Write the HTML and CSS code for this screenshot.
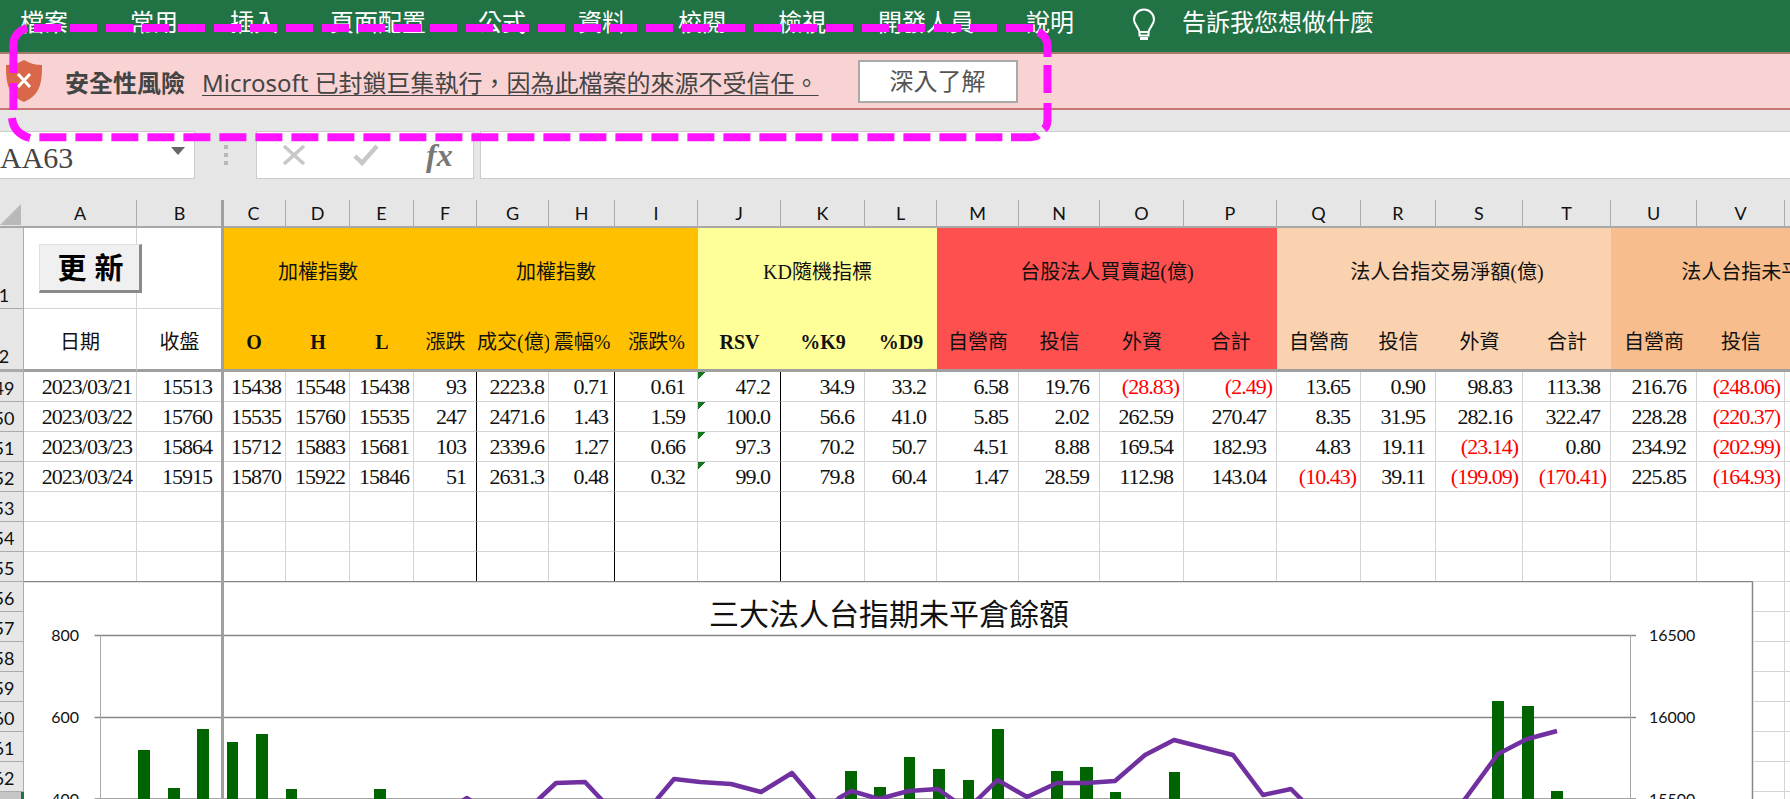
FILE: index.html
```html
<!DOCTYPE html>
<html lang="zh-Hant">
<head>
  <meta charset="UTF-8">
  <title>三大法人台指期未平倉餘額 - Excel</title>
  <link rel="stylesheet" href="styles.css">
</head>
<body>
  <!-- ribbon tabs -->
  <div class="ribbon">
    <span class="tab first">檔案</span>
    <span class="tab">常用</span>
    <span class="tab">插入</span>
    <span class="tab">頁面配置</span>
    <span class="tab">公式</span>
    <span class="tab">資料</span>
    <span class="tab">校閱</span>
    <span class="tab">檢視</span>
    <span class="tab">開發人員</span>
    <span class="tab">說明</span>
    <svg class="bulb" width="26" height="32" viewBox="0 0 26 32" fill="none" stroke="#fff" stroke-width="2">
      <path d="M13 1.5a10 10 0 0 0-10 10c0 5 4 7 5.5 12.5h9c1.5-5.5 5.5-7.500 5.500-12.500a10 10 0 0 0-10-10z"/>
      <path d="M8.5 24v3.500h9V24"/>
      <path d="M9 30.500h8" stroke-width="3"/>
    </svg>
    <span class="tell">告訴我您想做什麼</span>
  </div>

  <!-- security warning -->
  <div class="trust">
    <svg class="shield" width="36" height="42" viewBox="0 0 36 42">
      <path d="M18 0c5 3 11 5 18 5 0 16-1 30-18 37C1 35 0 21 0 5c7 0 13-2 18-5z" fill="#d9674a"/>
      <path d="M12 14l12 13M24 14L12 27" stroke="#fff" stroke-width="3" fill="none"/>
    </svg>
    <b class="trust-title">安全性風險</b>
    <span class="trust-msg">Microsoft 已封鎖巨集執行，因為此檔案的來源不受信任。</span>
    <span class="trust-btn">深入了解</span>
  </div>

  <!-- name box and formula bar -->
  <div class="formula-row">
    <div class="namebox"><span>AA63</span><i class="caret"></i></div>
    <div class="dots"><i></i><i></i><i></i></div>
    <div class="fx-box">
      <svg width="24" height="20" viewBox="0 0 24 20" fill="none" stroke="#c8c8c8" stroke-width="3.5"><path d="M2 1l20 18M22 1L2 19"/></svg>
      <svg width="26" height="22" viewBox="0 0 26 22" fill="none" stroke="#c8c8c8" stroke-width="4.5"><path d="M2 12l7 7L24 2"/></svg>
      <span class="fx">fx</span>
    </div>
    <div class="formula-input"></div>
  </div>

  <div class="sheet">
    <table class="grid">
      <colgroup>
        <col class="c-head">
        <col style="width:113px"><col style="width:85px"><col style="width:64px"><col style="width:64px">
        <col style="width:64px"><col style="width:63px"><col style="width:72px"><col style="width:66px">
        <col style="width:83px"><col style="width:83px"><col style="width:84px"><col style="width:72px">
        <col style="width:82px"><col style="width:81px"><col style="width:84px"><col style="width:93px">
        <col style="width:84px"><col style="width:75px"><col style="width:87px"><col style="width:88px">
        <col style="width:86px"><col style="width:88px"><col style="width:85px"><col style="width:95px">
      </colgroup>
      <tr class="cols">
        <th class="corner"><svg width="21" height="21" viewBox="0 0 21 21"><path d="M21 0v21H0z" fill="#b9b9b9"/></svg></th>
        <th>A</th><th class="fz">B</th><th>C</th><th>D</th><th>E</th><th>F</th><th>G</th><th>H</th><th>I</th>
        <th>J</th><th>K</th><th>L</th><th>M</th><th>N</th><th>O</th><th>P</th><th>Q</th><th>R</th><th>S</th>
        <th>T</th><th>U</th><th>V</th><th>W</th><th>X</th>
      </tr>
      <tr class="h1">
        <th class="rh"><span>1</span></th>
        <td></td><td class="fz"></td>
        <td colspan="3" class="amber">加權指數</td>
        <td colspan="4" class="amber">加權指數</td>
        <td colspan="3" class="lemon">KD隨機指標</td>
        <td colspan="4" class="red">台股法人買賣超(億)</td>
        <td colspan="4" class="peach">法人台指交易淨額(億)</td>
        <td colspan="4" class="tan">法人台指未平倉餘額(億)</td>
      </tr>
      <tr class="h2">
        <th class="rh"><span>2</span></th>
        <td>日期</td><td class="fz">收盤</td>
        <td class="amber lat">O</td><td class="amber lat">H</td><td class="amber lat">L</td>
        <td class="amber">漲跌</td><td class="amber">成交(億)</td><td class="amber">震幅%</td><td class="amber">漲跌%</td>
        <td class="lemon lat">RSV</td><td class="lemon lat">%K9</td><td class="lemon lat">%D9</td>
        <td class="red">自營商</td><td class="red">投信</td><td class="red">外資</td><td class="red">合計</td>
        <td class="peach">自營商</td><td class="peach">投信</td><td class="peach">外資</td><td class="peach">合計</td>
        <td class="tan">自營商</td><td class="tan">投信</td><td class="tan">外資</td><td class="tan">合計</td>
      </tr>
      <tr class="d">
        <th class="rh"><span>49</span></th>
        <td>2023/03/21</td><td>15513</td><td>15438</td><td>15548</td><td>15438</td><td>93</td><td>2223.8</td><td>0.71</td><td>0.61</td>
        <td class="tri">47.2</td><td>34.9</td><td>33.2</td><td>6.58</td><td>19.76</td><td class="neg">(28.83)</td><td class="neg">(2.49)</td>
        <td>13.65</td><td>0.90</td><td>98.83</td><td>113.38</td><td>216.76</td><td class="neg">(248.06)</td><td></td><td></td>
      </tr>
      <tr class="d">
        <th class="rh"><span>50</span></th>
        <td>2023/03/22</td><td>15760</td><td>15535</td><td>15760</td><td>15535</td><td>247</td><td>2471.6</td><td>1.43</td><td>1.59</td>
        <td class="tri">100.0</td><td>56.6</td><td>41.0</td><td>5.85</td><td>2.02</td><td>262.59</td><td>270.47</td>
        <td>8.35</td><td>31.95</td><td>282.16</td><td>322.47</td><td>228.28</td><td class="neg">(220.37)</td><td></td><td></td>
      </tr>
      <tr class="d">
        <th class="rh"><span>51</span></th>
        <td>2023/03/23</td><td>15864</td><td>15712</td><td>15883</td><td>15681</td><td>103</td><td>2339.6</td><td>1.27</td><td>0.66</td>
        <td class="tri">97.3</td><td>70.2</td><td>50.7</td><td>4.51</td><td>8.88</td><td>169.54</td><td>182.93</td>
        <td>4.83</td><td>19.11</td><td class="neg">(23.14)</td><td>0.80</td><td>234.92</td><td class="neg">(202.99)</td><td></td><td></td>
      </tr>
      <tr class="d">
        <th class="rh"><span>52</span></th>
        <td>2023/03/24</td><td>15915</td><td>15870</td><td>15922</td><td>15846</td><td>51</td><td>2631.3</td><td>0.48</td><td>0.32</td>
        <td class="tri">99.0</td><td>79.8</td><td>60.4</td><td>1.47</td><td>28.59</td><td>112.98</td><td>143.04</td>
        <td class="neg">(10.43)</td><td>39.11</td><td class="neg">(199.09)</td><td class="neg">(170.41)</td><td>225.85</td><td class="neg">(164.93)</td><td></td><td></td>
      </tr>
      <tr class="d">
        <th class="rh"><span>53</span></th>
        <td></td><td></td><td></td><td></td><td></td><td></td><td></td><td></td><td></td><td></td><td></td><td></td>
        <td></td><td></td><td></td><td></td><td></td><td></td><td></td><td></td><td></td><td></td><td></td><td></td>
      </tr>
      <tr class="d">
        <th class="rh"><span>54</span></th>
        <td></td><td></td><td></td><td></td><td></td><td></td><td></td><td></td><td></td><td></td><td></td><td></td>
        <td></td><td></td><td></td><td></td><td></td><td></td><td></td><td></td><td></td><td></td><td></td><td></td>
      </tr>
      <tr class="d">
        <th class="rh"><span>55</span></th>
        <td></td><td></td><td></td><td></td><td></td><td></td><td></td><td></td><td></td><td></td><td></td><td></td>
        <td></td><td></td><td></td><td></td><td></td><td></td><td></td><td></td><td></td><td></td><td></td><td></td>
      </tr>
      <!-- the chart covers everything left of W from here down -->
      <tr class="b"><th class="rh"><span>56</span></th><td colspan="22"></td><td></td><td></td></tr>
      <tr class="b"><th class="rh"><span>57</span></th><td colspan="22"></td><td></td><td></td></tr>
      <tr class="b"><th class="rh"><span>58</span></th><td colspan="22"></td><td></td><td></td></tr>
      <tr class="b"><th class="rh"><span>59</span></th><td colspan="22"></td><td></td><td></td></tr>
      <tr class="b"><th class="rh"><span>60</span></th><td colspan="22"></td><td></td><td></td></tr>
      <tr class="b"><th class="rh"><span>61</span></th><td colspan="22"></td><td></td><td></td></tr>
      <tr class="b"><th class="rh"><span>62</span></th><td colspan="22"></td><td></td><td></td></tr>
      <tr class="b"><th class="rh sel"><span>63</span></th><td colspan="22"></td><td></td><td></td></tr>
    </table>
  </div>

  <!-- chart floats over the cells, drawn in page coordinates -->
  <svg class="chart" width="1730" height="218" viewBox="24 581 1730 218">
    <path d="M24 581.500H1752.500V799" stroke="#868686" stroke-width="1.500" fill="none"/>
    <text class="chart-title" x="889" y="625" text-anchor="middle">三大法人台指期未平倉餘額</text>
    <path d="M94.500 635.500H1636M94.500 717.500H1636M94.500 799H1636" stroke="#868686" stroke-width="1.500" fill="none"/>
    <path d="M100.500 635V799M1630.500 635V799" stroke="#a6a6a6" stroke-width="1" fill="none"/>
    <g class="axis">
      <text x="79" y="641" text-anchor="end">800</text>
      <text x="79" y="723" text-anchor="end">600</text>
      <text x="79" y="805" text-anchor="end">400</text>
      <text x="1649" y="641">16500</text>
      <text x="1649" y="723">16000</text>
      <text x="1649" y="805">15500</text>
    </g>
    <g fill="#006400">
      <rect x="138" y="750" width="12" height="50"/>
      <rect x="168" y="788" width="12" height="12"/>
      <rect x="197" y="729" width="12" height="71"/>
      <rect x="227" y="742" width="11" height="58"/>
      <rect x="256" y="734" width="12" height="66"/>
      <rect x="286" y="789" width="11" height="11"/>
      <rect x="374" y="789" width="12" height="11"/>
      <rect x="845" y="771" width="12" height="29"/>
      <rect x="874" y="787" width="12" height="13"/>
      <rect x="904" y="757" width="11" height="43"/>
      <rect x="933" y="769" width="12" height="31"/>
      <rect x="963" y="780" width="11" height="20"/>
      <rect x="992" y="729" width="12" height="71"/>
      <rect x="1051" y="771" width="12" height="29"/>
      <rect x="1080" y="767" width="13" height="33"/>
      <rect x="1110" y="792" width="11" height="8"/>
      <rect x="1169" y="772" width="11" height="28"/>
      <rect x="1492" y="701" width="12" height="99"/>
      <rect x="1522" y="706" width="12" height="94"/>
      <rect x="1551" y="791" width="12" height="9"/>
    </g>
    <path d="M440 815L467 798 490 815 525 815 540 798 556 783 585 782 600 798 620 820 645 820 658 798 674 779 700 782 731 784 761 792 792 773 813 798 825 815 839 798 851.500 791 879 799 908.500 791 938 789 952 799 965 810 978 799 997.500 780 1027 797 1057 783 1086 783 1115 781 1145 755 1174 740 1233 755 1263 795 1291 789 1301 799 1320 830 1440 830 1465 799 1498 754 1527 739 1557 731" fill="none" stroke="#7030a0" stroke-width="4.500" stroke-linejoin="round"/>
  </svg>

  <!-- macro button and freeze panes -->
  <div class="macro-btn">更新</div>
  <div class="freeze"></div>

  <!-- annotation drawn on the screenshot -->
  <svg class="mark" width="1100" height="150" viewBox="0 0 1100 150" fill="none" stroke="#ff12ff" stroke-width="8">
    <path d="M27 28C18 31 13.4 36 13.4 45V73M13.4 83V110M12 118C13 128 19 135 30 138"/>
    <path d="M34 28H1034" stroke-dasharray="27 9"/>
    <path d="M39.4 137.300H1010" stroke-dasharray="27 9"/>
    <path d="M1011 137.300H1030Q1036 137 1038 135"/>
    <path d="M1038 32Q1047.500 36 1047.500 47V57M1047.500 65V93M1047.500 103V120Q1047.500 126 1044 129"/>
  </svg>
</body>
</html>
```

FILE: styles.css
```css
html, body {
  margin: 0;
  width: 1790px;
  height: 799px;
  overflow: hidden;
  background: #e6e6e6;
  position: relative;
  font-family: "Noto Sans", "Noto Sans CJK TC", sans-serif;
}

/* ribbon */
.ribbon {
  height: 54px;
  background: #217346;
  color: #fff;
  display: flex;
  align-items: center;
  gap: 52px;
  font-size: 24px;
  padding: 0 0 11px 20px;
  box-sizing: border-box;
  border-bottom: 2px solid #a57a68;
}
.tab.first {
  margin-right: 10px;
}
.bulb {
  margin-left: 5px;
  margin-top: 6px;
}
.tell {
  margin-left: -27px;
}

/* security warning */
.trust {
  height: 56px;
  box-sizing: border-box;
  background: #f9d3d3;
  border-bottom: 2px solid #c77575;
  display: flex;
  align-items: center;
  padding-left: 6px;
  color: #444;
  font-size: 24px;
}
.shield {
  margin-right: 23px;
}
.trust-title {
  width: 137px;
  font-weight: 700;
}
.trust-msg {
  text-decoration: underline;
  text-underline-offset: 3px;
  text-decoration-thickness: 1px;
}
.trust-btn {
  margin-left: 39px;
  width: 160px;
  height: 43px;
  box-sizing: border-box;
  background: #fff;
  border: 2.5px solid #aaa;
  color: #555;
  text-align: center;
  line-height: 37px;
}

/* formula bar */
.formula-row {
  display: flex;
  height: 69px;
  padding-top: 21px;
  box-sizing: border-box;
}
.namebox, .fx-box, .formula-input {
  height: 48px;
  background: #fff;
  border: 1px solid #ccc;
  box-sizing: border-box;
}
.namebox {
  width: 195px;
  border-left: 0;
  display: flex;
  align-items: center;
  padding-top: 5px;
  font: 30px "Liberation Serif", serif;
  color: #444;
}
.caret {
  margin-left: auto;
  margin-right: 9px;
  margin-top: -14px;
  border: 7px solid transparent;
  border-top: 8px solid #666;
  border-bottom: 0;
}
.dots {
  width: 61px;
  height: 48px;
  display: flex;
  flex-direction: column;
  align-items: center;
  gap: 4px;
  padding-top: 14px;
  box-sizing: border-box;
}
.dots i {
  width: 4px;
  height: 4px;
  background: #b9b9b9;
}
.fx-box {
  width: 218px;
  margin-right: 6px;
  display: flex;
  align-items: center;
  padding-left: 25px;
  gap: 47px;
}
.fx {
  font: italic 700 32px "Liberation Serif", serif;
  color: #777;
}
.formula-input {
  flex: 1;
  border-right: 0;
}

/* worksheet */
.sheet {
  overflow: hidden;
  height: 620px;
  padding-top: 21px;
  box-sizing: border-box;
}
.grid {
  table-layout: fixed;
  width: 1965px;
  border-collapse: separate;
  border-spacing: 0;
  background: #fff;
  font-family: "Liberation Serif", "Noto Sans CJK TC", serif;
  color: #111;
}
.c-head {
  width: 24px;
}
.grid td, .grid th {
  padding: 0;
  border-right: 1px solid #d4d4d4;
  border-bottom: 1px solid #d4d4d4;
  box-sizing: border-box;
  white-space: nowrap;
  overflow: hidden;
}
.cols th {
  height: 28px;
  background: #e6e6e6;
  font: 400 18px Lato, sans-serif;
  color: #111;
  border-right: 1px solid #ababab;
  border-bottom: 2px solid #a8a8a8;
}
.cols .corner {
  border-right: 0;
  text-align: left;
  vertical-align: top;
  padding-top: 4px;
  line-height: 0;
}
.rh {
  background: #e6e6e6;
  font: 400 18px Lato, sans-serif;
  vertical-align: bottom;
  text-align: left;
  border-bottom-color: #ababab !important;
  border-right-color: #ababab !important;
  padding-bottom: 2px !important;
}
.rh span {
  display: block;
  width: 38px;
  margin-left: -15px;
  text-align: center;
}
.rh.sel {
  background: #c6c6c6;
  border-right: 3px solid #217346 !important;
}
.h1 {
  height: 81px;
}
.h2 {
  height: 63px;
}
.h1 td, .h2 td {
  font-size: 20px;
  line-height: 1;
  text-align: center;
  vertical-align: middle;
  padding-top: 6px;
}
.h2 td, .h2 th {
  border-bottom: 3px solid #a0a0a0;
}
.h1 .peach {
  padding-left: 6px;
}
.lat {
  font-weight: 700;
}
.amber, .lemon, .red, .peach, .tan {
  border-right: 0 !important;
}
.h1 .amber, .h1 .lemon, .h1 .red, .h1 .peach, .h1 .tan {
  border-bottom: 0;
}
.amber { background: #ffc000; }
.lemon { background: #ffff99; }
.red { background: #ff5050; }
.peach { background: #fad2b0; }
.tan { background: #f7bd8c; }
.fz {
  border-right: 0 !important;
}

/* data rows */
.d, .b {
  height: 30px;
}
.d td {
  font-size: 22px;
  letter-spacing: -1px;
  line-height: 1;
  text-align: right;
  vertical-align: bottom;
  padding: 0 10px 3px 0;
}
.d td:nth-child(2), .d td:nth-child(4), .d td:nth-child(5), .d td:nth-child(6), .d td:nth-child(8) {
  padding-right: 4px;
}
.d td:nth-child(9) {
  padding-right: 6px;
}
.d td:nth-child(10) {
  padding-right: 12px;
}
.d td:nth-child(7), .d td:nth-child(9), .d td:nth-child(11) {
  border-right: 1.5px solid #000;
}
.d td:nth-child(3) {
  border-right: 0;
}
.d td.neg {
  color: #f00;
  padding-right: 4px;
}
.tri {
  background: linear-gradient(135deg, #13761d 50%, transparent 50%) top left / 8px 8px no-repeat;
}

/* things lying over the cells */
.chart {
  position: absolute;
  left: 24px;
  top: 581px;
  background: #fff;
}
.chart-title {
  font: 30px "Noto Sans CJK TC", sans-serif;
  fill: #111;
}
.axis text {
  font: 16px Lato, sans-serif;
  fill: #111;
}
.macro-btn {
  position: absolute;
  left: 39px;
  top: 244px;
  width: 103px;
  height: 49px;
  box-sizing: border-box;
  background: #f0f0f0;
  border-style: solid;
  border-width: 1px 3px 3px 1px;
  border-color: #e0e0e0 #8a8a8a #8a8a8a #e0e0e0;
  padding: 3px 0 0 10px;
  font: 700 29px "Liberation Serif", "Noto Sans CJK TC", serif;
  letter-spacing: 8px;
  text-align: center;
  line-height: 42px;
  color: #000;
}
.freeze {
  position: absolute;
  left: 221px;
  top: 200px;
  bottom: 0;
  width: 2.5px;
  background: #a0a0a0;
}
.mark {
  position: absolute;
  left: 0;
  top: 0;
}
```
